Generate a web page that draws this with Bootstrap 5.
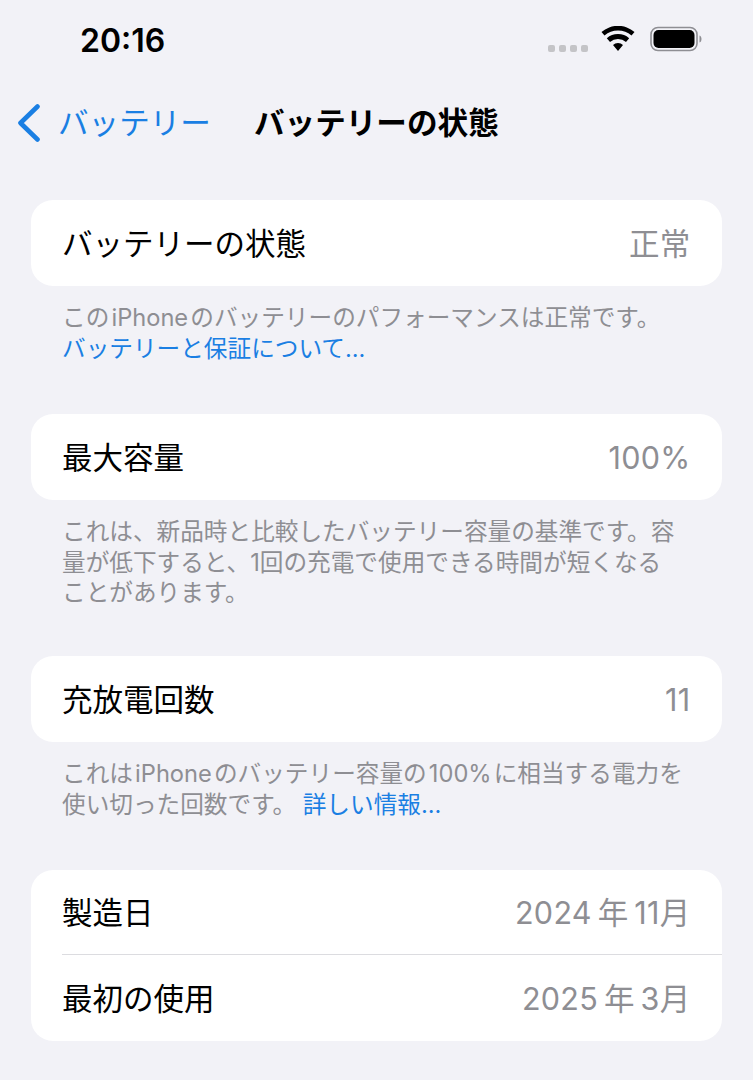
<!DOCTYPE html>
<html lang="ja">
<head>
<meta charset="utf-8">
<title>バッテリーの状態</title>
<link href="https://cdn.jsdelivr.net/npm/bootstrap@5.3.0/dist/css/bootstrap.min.css" rel="stylesheet">
<style>
html,body{height:1080px;overflow:hidden}
body{background:#f2f2f7;color:#000;font-family:Inter,"Noto Sans CJK JP",sans-serif}
.status-bar{height:82px;padding:0 51px 0 80px}
.clock{font-size:32px;font-weight:600;line-height:1}
.status-icons{padding-bottom:4px}
.sig-dots{gap:4px;margin-top:19px;margin-right:13px}
.sig-dots i{width:7px;height:7px;border-radius:2px;background:#c4c4c7;display:block}
.wifi-icon{margin-right:15px}
.nav-row{height:82px;padding-left:17px;font-size:30.6px}
.back-link{color:#1a7fe3;width:237px;gap:17px}
.nav-title{font-weight:700}
.content{padding:36px 31px 0}
.panel{background:#fff;border:0;border-radius:22px;overflow:hidden}
.row-item{height:86px;padding:3px 31.500px 0 31px;font-size:30.5px;line-height:1}
.row-item.upper{height:84px}
.row-item.lower{height:86px}
.row-item .val{color:#8e8e93;letter-spacing:.3px}
.row-sep{height:1px;background:#dcdce0;margin-left:31px}
.foot{color:#8e8e93;font-size:23.65px;line-height:30.6px;padding:17px 31px 0;margin:0;white-space:nowrap}
.foot a{color:#1a7fe3;text-decoration:none}
.f1,.f3{height:128px}.f2{height:156px}
</style>
</head>
<body>
<div class="status-bar d-flex align-items-center justify-content-between">
  <div class="clock">20:16</div>
  <div class="status-icons d-flex align-items-center">
    <div class="sig-dots d-flex"><i></i><i></i><i></i><i></i></div>
    <svg class="wifi-icon" width="34" height="26" viewBox="0 0 34 26" aria-hidden="true"><path d="M17 25l-5-6a7 7 0 0 1 10 0zM9 16l-3.200-3.800a17 17 0 0 1 22.400 0L25 16a12 12 0 0 0-16 0zM3.500 9.500L.5 6a25 25 0 0 1 33 0l-3 3.500a20.500 20.500 0 0 0-27 0z" fill="#000"/></svg>
    <svg width="52" height="26" viewBox="0 0 52 26" aria-hidden="true"><rect x="1" y="1.500" width="46" height="23" rx="7" fill="none" stroke="#8e8e93" stroke-width="1.600"/><rect x="3.500" y="4" width="41" height="18" rx="5" fill="#000"/><path d="M49.500 9.500c1.500.5 2 2 2 3.500s-.5 3-2 3.500z" fill="#8e8e93"/></svg>
  </div>
</div>
<div class="nav-row d-flex align-items-center">
  <a class="back-link d-flex align-items-center text-decoration-none" href="#">
    <svg width="24" height="38" viewBox="0 0 24 38" aria-hidden="true"><path d="M20.500 2.500L3.500 19l17 16.500" fill="none" stroke="#1a7fe3" stroke-width="4.600" stroke-linecap="round" stroke-linejoin="round"/></svg>
    <span>バッテリー</span>
  </a>
  <div class="nav-title">バッテリーの状態</div>
</div>
<div class="content">
  <div class="panel card">
    <div class="row-item d-flex align-items-center justify-content-between"><span>バッテリーの状態</span><span class="val">正常</span></div>
  </div>
  <div class="f1"><p class="foot">この&#8202;iPhone&#8202;のバッテリーのパフォーマンスは正常です。<br><a href="#">バッテリーと保証について...</a></p></div>
  <div class="panel card">
    <div class="row-item d-flex align-items-center justify-content-between"><span>最大容量</span><span class="val">100%</span></div>
  </div>
  <div class="f2"><p class="foot">これは、新品時と比較したバッテリー容量の基準です。容<br>量が低下すると、1回の充電で使用できる時間が短くなる<br>ことがあります。</p></div>
  <div class="panel card">
    <div class="row-item d-flex align-items-center justify-content-between"><span>充放電回数</span><span class="val">11</span></div>
  </div>
  <div class="f3"><p class="foot">これは&#8202;iPhone&#8202;のバッテリー容量の&#8202;100%&#8202;に相当する電力を<br>使い切った回数です。 <a href="#">詳しい情報...</a></p></div>
  <div class="panel card">
    <div class="row-item upper d-flex align-items-center justify-content-between"><span>製造日</span><span class="val">2024&#8201;年&#8201;11月</span></div>
    <div class="row-sep"></div>
    <div class="row-item lower d-flex align-items-center justify-content-between"><span>最初の使用</span><span class="val">2025&#8201;年&#8201;3月</span></div>
  </div>
</div>
<script src="https://cdn.jsdelivr.net/npm/bootstrap@5.3.0/dist/js/bootstrap.bundle.min.js"></script>
</body>
</html>
